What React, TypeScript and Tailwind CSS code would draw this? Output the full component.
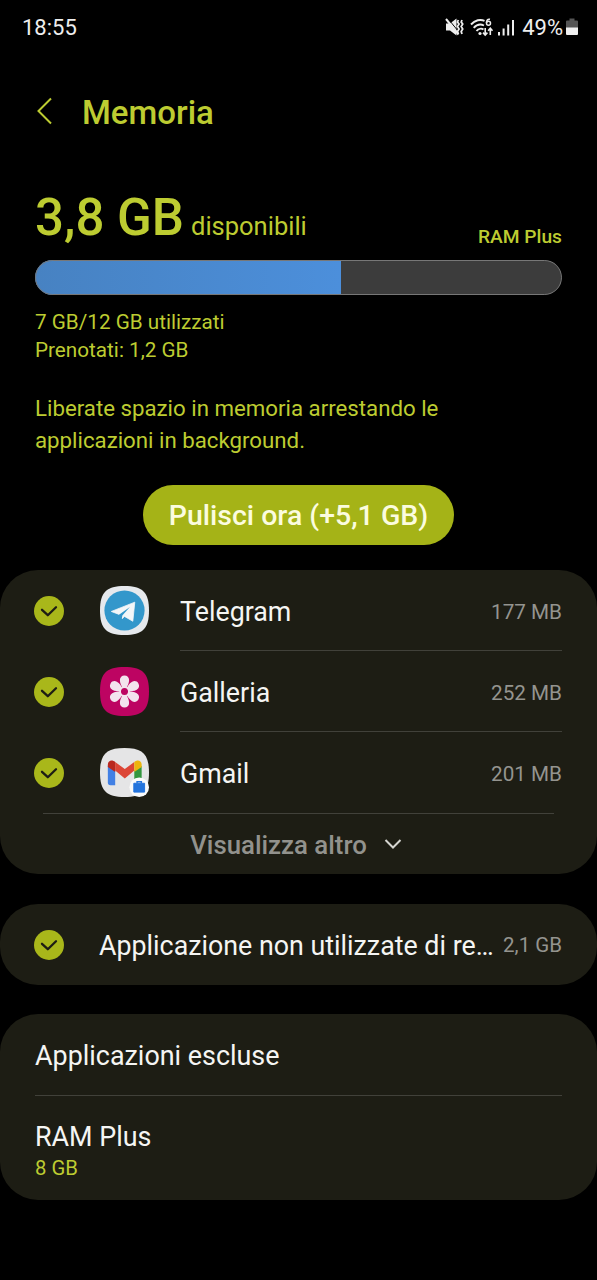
import React from 'react';

type AppItem = {
  name: string;
  size: string;
  icon: React.ReactNode;
};

const SQUIRCLE = 'M25 0C43.500 0 50 6.500 50 25S43.500 50 25 50 0 43.500 0 25 6.500 0 25 0Z';

const CheckBadge: React.FC = () => (
  <svg viewBox="0 0 30 30" className="w-[30px] h-[30px] shrink-0">
    <circle cx="15" cy="15" r="15" fill="#a9b71a" />
    <path d="M8 13.800L13.800 19.200L22 11.200" fill="none" stroke="#1d1d14" strokeWidth="2.300" strokeLinecap="round" strokeLinejoin="round" />
  </svg>
);

const TelegramIcon: React.FC = () => (
  <svg viewBox="0 0 50 50" className="w-[49px] h-[49px]">
    <path d={SQUIRCLE} fill="#e6e9ed" />
    <circle cx="25" cy="25" r="20.500" fill="#3397cb" />
    <path d="M11.500 26L35.500 16.500L33.500 36L25 31L22.500 33.500L19.500 29Z" fill="#f3f6f8" stroke="#f3f6f8" strokeWidth="0.800" strokeLinejoin="round" />
    <path d="M19 29.500L30.500 21.500L22.800 30L22 35Z" fill="#3397cb" />
  </svg>
);

const GalleryIcon: React.FC = () => (
  <svg viewBox="0 0 50 50" className="w-[49px] h-[49px]">
    <path d={SQUIRCLE} fill="#bd0462" />
    {[0, 60, 120, 180, 240, 300].map(angle => (
      <path
        key={angle}
        d="M22.800 21C21.800 19 20.300 16.500 20.300 13.300C20.300 10.500 22.300 8.600 25 8.600S29.700 10.500 29.700 13.300C29.700 16.500 28.200 19 27.200 21Z"
        fill="#f3e3ee"
        transform={`rotate(${angle} 25 25)`}
      />
    ))}
    <circle cx="25" cy="25" r="4.500" fill="none" stroke="#f3e3ee" strokeWidth="1.800" />
  </svg>
);

const GmailIcon: React.FC = () => (
  <svg viewBox="0 0 50 50" className="w-[49px] h-[49px]">
    <path d={SQUIRCLE} fill="#e5e5e6" />
    <path d="M8 18L15.500 23V38H10.500C9 38 8 37 8 35.500Z" fill="#4280e4" />
    <path d="M42.500 18L35 23V38H40C41.500 38 42.500 37 42.500 35.500Z" fill="#34963f" />
    <path d="M15.500 14.300L25.300 21.500L35 14.300V23L25.300 31L15.500 23Z" fill="#dc4637" />
    <path d="M8 19.500V17C8 12.500 12.500 11.500 15.500 14.300V24.500Z" fill="#b9281f" />
    <path d="M42.500 19.500V17C42.500 12.500 38 11.500 35 14.300V24.500Z" fill="#edb50e" />
    <circle cx="40" cy="40" r="10" fill="#fafafa" />
    <path d="M34.500 36H45.500V45H34.500Z" fill="#2474dc" stroke="#2474dc" strokeLinejoin="round" />
    <path d="M37.800 36V34.500H42.200V36" fill="none" stroke="#2474dc" strokeWidth="1.500" />
  </svg>
);

const StatusIcons: React.FC = () => (
  <svg viewBox="0 0 74 24" className="w-[74px] h-[24px]">
    {/* muted, vibrate */}
    <path d="M1 8.500H5L11.500 3.500V20.500L5 15.500H1Z" fill="#eee" />
    <path d="M2.800 3.400L15 18.400" stroke="#000" strokeWidth="1" />
    <path d="M1 4L13.500 19.500" stroke="#eee" strokeWidth="2" />
    <path d="M13.300 5L12.500 7L14 9L12.500 11.500L14 14L12.500 16.500L13.300 19M17 5L16.200 7L17.700 9L16.200 11.500L17.700 14L16.200 16.500L17 19" fill="none" stroke="#eee" strokeWidth="1.800" />
    {/* wifi */}
    <path d="M26 9.500C30 5 35.500 4 39.500 5.800M28.700 12.800C31.700 9.500 35.500 8.800 39 10.500M31.500 16C33.500 13.600 36.500 13.200 38.500 14.500" fill="none" stroke="#eee" strokeWidth="1.900" />
    <circle cx="35" cy="18.500" r="1.600" fill="#eee" />
    <path d="M45 4.300C42.500 3.800 41.500 5.500 41.500 8" fill="none" stroke="#eee" strokeWidth="1.600" />
    <circle cx="43.500" cy="8.300" r="2" fill="none" stroke="#eee" strokeWidth="1.500" />
    <path d="M40.200 13V20M38 17.600L40.200 20L42.400 17.600M45.300 20V13.300M43.100 15.700L45.300 13.300L47.500 15.700" fill="none" stroke="#eee" strokeWidth="1.600" />
    {/* signal */}
    <path d="M54 17V20.500M58.600 13.500V20.500M63.200 9.500V20.500M68 5V20.500" stroke="#eee" strokeWidth="2" />
  </svg>
);

const BatteryIcon: React.FC = () => (
  <svg viewBox="0 0 12 18" className="w-[12px] h-[18px]">
    <path d="M3.500 0.500H8.500V2.500H11Q12 2.500 12 3.500V10H0V3.500Q0 2.500 1 2.500H3.500Z" fill="#555" />
    <path d="M0 9.500H12V16Q12 17 11 17H1Q0 17 0 16Z" fill="#f0f0f0" />
  </svg>
);

const apps: AppItem[] = [
  { name: 'Telegram', size: '177 MB', icon: <TelegramIcon /> },
  { name: 'Galleria', size: '252 MB', icon: <GalleryIcon /> },
  { name: 'Gmail', size: '201 MB', icon: <GmailIcon /> },
];

const AppRow: React.FC<{ app: AppItem, last: boolean }> = ({ app, last }) => (
  <div className="flex items-center h-[81px] pl-[34px]">
    <CheckBadge />
    <div className="ml-[36px] w-[49px] shrink-0">{app.icon}</div>
    <div className={last
      ? 'flex-1 h-full ml-[31px] mr-[35px] flex items-center justify-between border-b border-transparent pt-[5px]'
      : 'flex-1 h-full ml-[31px] mr-[35px] flex items-center justify-between border-b border-[#41413a] pt-[4px]'}
    >
      <span className="text-[26.800px] text-[#f5f5f3]">{app.name}</span>
      <span className="pt-px text-[20.700px] text-[#94948f]">{app.size}</span>
    </div>
  </div>
);

export default function App() {
  return (
    <div className="w-full h-[1280px] bg-black overflow-hidden whitespace-nowrap text-[#bdcc31] font-['Roboto',sans-serif]">
      <div className="h-[54px] flex items-center justify-between pl-[22px] pr-[19px] text-[22px] text-[#eeeeee]">
        <span>18:55</span>
        <div className="flex items-center">
          <StatusIcons />
          <span className="ml-[3px] mr-[3px]">49%</span>
          <BatteryIcon />
        </div>
      </div>

      <header className="h-[118px] flex items-center pl-[36px]">
        <svg viewBox="0 0 16 28" className="w-[16px] h-[28px] -mt-[4px]">
          <path d="M15 1.500L2.500 14L15 26.500" fill="none" stroke="#bdcc31" strokeWidth="2" />
        </svg>
        <h1 className="ml-[30px] text-[33px] font-medium">Memoria</h1>
      </header>

      <section className="px-[35px] pt-[16px]">
        <div className="h-[72px] flex justify-between">
          <div className="leading-[60px]">
            <span className="text-[51px] font-medium">3,8 GB</span>
            <span className="ml-[7px] text-[25.500px]">disponibili</span>
          </div>
          <span className="mt-[35px] text-[19.200px] leading-[28px] font-medium">RAM Plus</span>
        </div>
        <div className="relative h-[35px] rounded-full overflow-hidden bg-[#3c3c3c]">
          <div className="w-[306px] h-full bg-linear-to-r from-[#4782c2] to-[#4c8fdb]" />
          <div className="absolute inset-0 rounded-full border border-[#777777]" />
        </div>
        <div className="mt-[13px] text-[20.700px] leading-[28px]">
          <p>7 GB/12 GB utilizzati</p>
          <p>Prenotati: 1,2 GB</p>
        </div>
        <p className="mt-[28px] text-[22.250px] leading-[32px]">
          Liberate spazio in memoria arrestando le<br />
          applicazioni in background.
        </p>
        <button className="block mx-auto mt-[29px] pt-[3px] w-[311px] h-[60px] rounded-full bg-[#a5b317] text-[28.500px] font-medium text-[#fbfcdf]">
          Pulisci ora (+5,1 GB)
        </button>
      </section>

      <section className="mt-[25px] h-[304px] rounded-[38px] bg-[#1d1d14]">
        {apps.map((app, i) => (
          <AppRow key={app.name} app={app} last={i === apps.length - 1} />
        ))}
        <div className="mx-[43px] h-[61px] border-t border-[#41413a] flex items-center justify-center pr-[5px] text-[25.800px] font-medium text-[#92928d]">
          <span className="pt-[3px]">Visualizza altro</span>
          <svg viewBox="0 0 18 10" className="ml-[17px] w-[18px] h-[10px]">
            <path d="M1.500 1L9 8.500L16.500 1" fill="none" stroke="#d5d5d0" strokeWidth="2" />
          </svg>
        </div>
      </section>

      <section className="mt-[30px] h-[81px] rounded-[38px] bg-[#1d1d14] flex items-center pl-[34px] pr-[35px]">
        <CheckBadge />
        <span className="ml-[35px] pt-[3px] flex-1 text-[26.800px] text-[#f5f5f3]">Applicazione non utilizzate di re…</span>
        <span className="pt-[2px] text-[20.500px] text-[#94948f]">2,1 GB</span>
      </section>

      <section className="mt-[29px] h-[186px] rounded-[38px] bg-[#1d1d14] px-[35px]">
        <div className="h-[82px] flex items-center border-b border-[#41413a] pt-[4px] text-[26.900px] text-[#f5f5f3]">
          Applicazioni escluse
        </div>
        <div className="pt-[25px]">
          <p className="text-[26.900px] leading-[32px] text-[#f5f5f3]">RAM Plus</p>
          <p className="text-[20.300px] leading-[31px]">8 GB</p>
        </div>
      </section>
    </div>
  );
}
